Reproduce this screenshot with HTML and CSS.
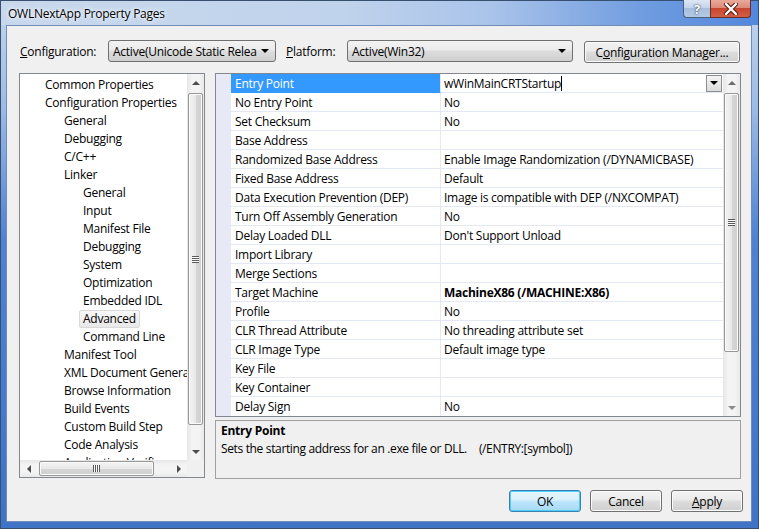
FILE: index.html
```html
<!DOCTYPE html>
<html lang="en">
<head>
    <meta charset="UTF-8">
    <title>OWLNextApp Property Pages</title>
    <link rel="stylesheet" href="styles.css">
</head>
<body>
    <div class="window">
        <div class="titlebar">
            <span class="title">OWLNextApp Property Pages</span>
            <div class="caption-buttons">
                <div class="cap-btn help">?</div>
                <div class="cap-btn close">
                    <svg width="14" height="12" viewBox="0 0 14 12">
                        <path d="M2 1 L12 11 M12 1 L2 11" stroke="#5a1d14" stroke-width="4.4" stroke-linecap="round"/>
                        <path d="M2 1 L12 11 M12 1 L2 11" stroke="#ffffff" stroke-width="2.4" stroke-linecap="round"/>
                    </svg>
                </div>
            </div>
        </div>

        <div class="client">
            <div class="config-row">
                <label class="label-config"><u>C</u>onfiguration:</label>
                <div class="combo combo-config">
                    <span>Active(Unicode Static Relea</span>
                    <span class="combo-arrow"></span>
                </div>
                <label class="label-platform"><u>P</u>latform:</label>
                <div class="combo combo-platform">
                    <span>Active(Win32)</span>
                    <span class="combo-arrow"></span>
                </div>
                <button class="btn btn-manager">C<u>o</u>nfiguration Manager...</button>
            </div>

            <div class="main">
                <!-- left tree -->
                <div class="tree-box">
                    <div class="tree-top">
                        <div class="tree-items">
                            <div class="tree-item l1"><span>Common Properties</span></div>
                            <div class="tree-item l1"><span>Configuration Properties</span></div>
                            <div class="tree-item l2"><span>General</span></div>
                            <div class="tree-item l2"><span>Debugging</span></div>
                            <div class="tree-item l2"><span>C/C++</span></div>
                            <div class="tree-item l2"><span>Linker</span></div>
                            <div class="tree-item l3"><span>General</span></div>
                            <div class="tree-item l3"><span>Input</span></div>
                            <div class="tree-item l3"><span>Manifest File</span></div>
                            <div class="tree-item l3"><span>Debugging</span></div>
                            <div class="tree-item l3"><span>System</span></div>
                            <div class="tree-item l3"><span>Optimization</span></div>
                            <div class="tree-item l3"><span>Embedded IDL</span></div>
                            <div class="tree-item l3 selected"><span>Advanced</span></div>
                            <div class="tree-item l3"><span>Command Line</span></div>
                            <div class="tree-item l2"><span>Manifest Tool</span></div>
                            <div class="tree-item l2"><span>XML Document Generator</span></div>
                            <div class="tree-item l2"><span>Browse Information</span></div>
                            <div class="tree-item l2"><span>Build Events</span></div>
                            <div class="tree-item l2"><span>Custom Build Step</span></div>
                            <div class="tree-item l2"><span>Code Analysis</span></div>
                            <div class="tree-item l2"><span>Application Verifier</span></div>
                        </div>
                        <div class="vscroll tree-vscroll">
                            <div class="sb-btn"><span class="tri-up"></span></div>
                            <div class="sb-track">
                                <div class="v-thumb"><span class="grip-h"></span></div>
                            </div>
                            <div class="sb-btn"><span class="tri-down"></span></div>
                        </div>
                    </div>
                    <div class="tree-bottom">
                        <div class="hscroll">
                            <div class="sb-btn"><span class="tri-left"></span></div>
                            <div class="sb-track">
                                <div class="h-thumb"><span class="grip-v"></span></div>
                            </div>
                            <div class="sb-btn"><span class="tri-right"></span></div>
                        </div>
                        <div class="sizebox"></div>
                    </div>
                </div>

                <!-- property grid -->
                <div class="prop-panel">
                    <div class="grid">
                        <div class="gutter"></div>
                        <div class="rows">
                            <div class="row selected">
                                <div class="name">Entry Point</div>
                                <div class="value editing">
                                    <span class="edit-text">wWinMainCRTStartup</span><span class="caret"></span>
                                    <span class="drop-btn"><span class="tri-down dark"></span></span>
                                </div>
                            </div>
                            <div class="row"><div class="name">No Entry Point</div><div class="value">No</div></div>
                            <div class="row"><div class="name">Set Checksum</div><div class="value">No</div></div>
                            <div class="row"><div class="name">Base Address</div><div class="value"></div></div>
                            <div class="row"><div class="name">Randomized Base Address</div><div class="value">Enable Image Randomization (/DYNAMICBASE)</div></div>
                            <div class="row"><div class="name">Fixed Base Address</div><div class="value">Default</div></div>
                            <div class="row"><div class="name">Data Execution Prevention (DEP)</div><div class="value">Image is compatible with DEP (/NXCOMPAT)</div></div>
                            <div class="row"><div class="name">Turn Off Assembly Generation</div><div class="value">No</div></div>
                            <div class="row"><div class="name">Delay Loaded DLL</div><div class="value">Don't Support Unload</div></div>
                            <div class="row"><div class="name">Import Library</div><div class="value"></div></div>
                            <div class="row"><div class="name">Merge Sections</div><div class="value"></div></div>
                            <div class="row"><div class="name">Target Machine</div><div class="value bold">MachineX86 (/MACHINE:X86)</div></div>
                            <div class="row"><div class="name">Profile</div><div class="value">No</div></div>
                            <div class="row"><div class="name">CLR Thread Attribute</div><div class="value">No threading attribute set</div></div>
                            <div class="row"><div class="name">CLR Image Type</div><div class="value">Default image type</div></div>
                            <div class="row"><div class="name">Key File</div><div class="value"></div></div>
                            <div class="row"><div class="name">Key Container</div><div class="value"></div></div>
                            <div class="row last"><div class="name">Delay Sign</div><div class="value">No</div></div>
                        </div>
                        <div class="vscroll grid-vscroll">
                            <div class="sb-btn"><span class="tri-up light"></span></div>
                            <div class="sb-track">
                                <div class="v-thumb"><span class="grip-h"></span></div>
                            </div>
                            <div class="sb-btn"><span class="tri-down light"></span></div>
                        </div>
                    </div>
                    <div class="desc">
                        <div class="desc-title">Entry Point</div>
                        <div class="desc-text">Sets the starting address for an .exe file or DLL.<span class="switch">(/ENTRY:[symbol])</span></div>
                    </div>
                </div>
            </div>

            <div class="buttons">
                <button class="btn btn-default">OK</button>
                <button class="btn">Cancel</button>
                <button class="btn"><u>A</u>pply</button>
            </div>
        </div>
    </div>
</body>
</html>
```

FILE: styles.css
```css
* {
    box-sizing: border-box;
}

body {
    margin: 0;
    font-family: "Open Sans", "Segoe UI", sans-serif;
    font-size: 12px;
    letter-spacing: -0.25px;
    color: #000;
    background: #fff;
}

/* window frame */
.window {
    width: 759px;
    height: 529px;
    border: 1px solid #37506f;
    background: linear-gradient(to bottom, #c4d6ec 0%, #9dbbe4 20%, #4f82d2 45%, #3f73c6 100%);
    display: flex;
    flex-direction: column;
}

.titlebar {
    height: 24px;
    display: flex;
    align-items: flex-start;
    padding-left: 7px;
    background: linear-gradient(to right, #c8d8ec 0%, #c0d3ec 45%, #a9c3ea 65%, #6f9ce0 85%, #5288dc 100%);
}

.title {
    line-height: 26px;
    font-size: 12px;
    text-shadow: 0 0 6px #fff, 0 0 3px #fff;
}

.caption-buttons {
    margin-left: auto;
    margin-right: 7px;
    display: flex;
    margin-top: -1px;
}

.cap-btn {
    height: 18px;
    display: flex;
    align-items: center;
    justify-content: center;
    border: 1px solid #4d5f7c;
    border-top: none;
}

.cap-btn.help {
    width: 27px;
    border-radius: 0 0 0 4px;
    border-right: none;
    background: linear-gradient(to bottom, #dce6f3 0%, #c5d5ea 45%, #a7bedd 50%, #b4cbe6 100%);
    color: #fff;
    font-weight: bold;
    font-size: 13px;
    text-shadow: 0 0 2px #33445e, 0 0 1px #33445e;
}

.cap-btn.close {
    width: 41px;
    border-radius: 0 0 4px 0;
    border-color: #6b2d24;
    background: linear-gradient(to bottom, #e9a99b 0%, #dd8b79 45%, #c8462d 50%, #d25f45 100%);
}

.client {
    margin: 0 6px 6px 5px;
    height: 497px;
    border: 1px solid #6f8db8;
    background: #f0f0f0;
    padding: 0 8px 0 0;
}

/* top row */
.config-row {
    display: flex;
    align-items: center;
    padding: 14px 0 0 13px;
    height: 36px;
}

.label-config {
    width: 88px;
}

.label-platform {
    width: 61px;
}

.combo {
    height: 22px;
    border: 1px solid #707070;
    border-radius: 3px;
    background: linear-gradient(to bottom, #f2f2f2 0%, #ebebeb 45%, #dddddd 50%, #cfcfcf 100%);
    display: flex;
    align-items: center;
    padding-left: 4px;
    white-space: nowrap;
    overflow: hidden;
}

.combo-config {
    width: 168px;
    margin-right: 10px;
}

.combo-platform {
    width: 226px;
    margin-right: 11px;
}

.combo-arrow {
    margin-left: auto;
    margin-right: 6px;
    border-left: 4px solid transparent;
    border-right: 4px solid transparent;
    border-top: 4px solid #000;
}

.btn {
    height: 22px;
    border: 1px solid #707070;
    border-radius: 3px;
    background: linear-gradient(to bottom, #f2f2f2 0%, #ebebeb 45%, #dddddd 50%, #cfcfcf 100%);
    font-family: inherit;
    font-size: 12px;
    letter-spacing: -0.25px;
    color: #000;
    padding: 0;
    box-shadow: inset 0 0 0 1px #fcfcfc;
}

.btn-manager {
    width: 156px;
    margin-top: 2px;
}

.btn-default {
    border-color: #3c7fb1;
    background: linear-gradient(to bottom, #eaf6fd 0%, #d9f0fc 45%, #bee6fd 50%, #a7d9f5 100%);
    box-shadow: inset 0 0 0 1px #48d0fb;
}

/* main area */
.main {
    display: flex;
    gap: 10px;
    margin-top: 11px;
    padding-left: 12px;
    height: 406px;
}

.tree-box {
    width: 186px;
    height: 405px;
    border: 1px solid #828790;
    background: #fff;
    display: flex;
    flex-direction: column;
}

.tree-top {
    display: flex;
    height: 386px;
}

.tree-items {
    width: 167px;
    overflow: hidden;
    padding-top: 2px;
}

.tree-item {
    height: 18px;
    line-height: 16px;
    white-space: nowrap;
}

.tree-item span {
    display: inline-block;
    padding: 0 3px;
    border: 1px solid transparent;
    border-radius: 2px;
}

.tree-item.l1 {
    padding-left: 21px;
}

.tree-item.l2 {
    padding-left: 40px;
}

.tree-item.l3 {
    padding-left: 59px;
}

.tree-item.selected span {
    border-color: #d9d9d9;
    background: linear-gradient(to bottom, #f8f8f8, #e8e8e8);
}

/* scrollbars */
.vscroll {
    width: 17px;
    display: flex;
    flex-direction: column;
    background: linear-gradient(to right, #e6e6e6, #f4f4f4 30%, #f4f4f4 70%, #e9e9e9);
}

.sb-btn {
    width: 17px;
    height: 17px;
    display: flex;
    align-items: center;
    justify-content: center;
    flex-shrink: 0;
}

.sb-track {
    flex: 1;
    display: flex;
}

.vscroll .sb-track {
    flex-direction: column;
    padding: 2px 1px 0 1px;
}

.v-thumb {
    height: 332px;
    border: 1px solid #979797;
    border-radius: 2px;
    background: linear-gradient(to right, #f3f3f3 0%, #e8e8e8 50%, #d6d6d6 51%, #cfcfcf 100%);
    box-shadow: inset 0 0 0 1px #fbfbfb;
    display: flex;
    align-items: center;
    justify-content: center;
}

.grid-vscroll .v-thumb {
    height: 259px;
}

.grip-h {
    width: 7px;
    height: 7px;
    background: repeating-linear-gradient(to bottom, #5a5a5a 0 1px, #fdfdfd 1px 2px);
}

.grip-v {
    width: 7px;
    height: 7px;
    background: repeating-linear-gradient(to right, #5a5a5a 0 1px, #fdfdfd 1px 2px);
}

.tree-bottom {
    display: flex;
    height: 17px;
}

.hscroll {
    width: 167px;
    display: flex;
    background: linear-gradient(to bottom, #e6e6e6, #f4f4f4 30%, #f4f4f4 70%, #e9e9e9);
}

.hscroll .sb-track {
    padding: 1px 0 1px 2px;
}

.h-thumb {
    width: 115px;
    border: 1px solid #979797;
    border-radius: 2px;
    background: linear-gradient(to bottom, #f3f3f3 0%, #e8e8e8 50%, #d6d6d6 51%, #cfcfcf 100%);
    box-shadow: inset 0 0 0 1px #fbfbfb;
    display: flex;
    align-items: center;
    justify-content: center;
}

.sizebox {
    width: 17px;
    background: #f0f0f0;
}

.tri-up, .tri-down {
    width: 0;
    height: 0;
    border-left: 4px solid transparent;
    border-right: 4px solid transparent;
}

.tri-up {
    border-bottom: 4px solid #4d4d4d;
}

.tri-down {
    border-top: 4px solid #4d4d4d;
}

.tri-up.light {
    border-bottom-color: #6d6d6d;
}

.tri-down.light {
    border-top-color: #8a8a8a;
}

.tri-down.dark {
    border-top-color: #000;
}

.tri-left, .tri-right {
    width: 0;
    height: 0;
    border-top: 4px solid transparent;
    border-bottom: 4px solid transparent;
}

.tri-left {
    border-right: 4px solid #4d4d4d;
}

.tri-right {
    border-left: 4px solid #4d4d4d;
}

/* property grid */
.prop-panel {
    width: 526px;
    display: flex;
    flex-direction: column;
}

.grid {
    height: 344px;
    border: 1px solid #828790;
    background: #fff;
    display: flex;
}

.gutter {
    width: 15px;
    background: #e7eaf6;
}

.rows {
    width: 492px;
}

.row {
    display: flex;
    height: 19px;
}

.row .name,
.row .value {
    height: 19px;
    padding-top: 1px;
    line-height: 17px;
    border-bottom: 1px solid #e3e8f4;
    white-space: nowrap;
    overflow: hidden;
}

.row.last .name,
.row.last .value {
    border-bottom: none;
}

.row .name {
    width: 210px;
    padding-left: 4px;
    border-right: 1px solid #e3e8f4;
}

.row .value {
    width: 282px;
    padding-left: 3px;
}

.value.bold {
    font-weight: bold;
}

.row.selected .name {
    background: #3399ff;
    color: #fff;
    border-bottom-color: #3399ff;
}

.value.editing {
    display: flex;
    align-items: center;
    padding-top: 0;
}

.caret {
    width: 1px;
    height: 15px;
    background: #000;
}

.drop-btn {
    margin-left: auto;
    margin-right: 1px;
    width: 16px;
    height: 17px;
    border: 1px solid #8d8d8d;
    background: linear-gradient(to bottom, #f4f4f4, #dcdcdc);
    display: flex;
    align-items: center;
    justify-content: center;
}

.desc {
    margin-top: 3px;
    height: 59px;
    border: 1px solid #a0a0a0;
    padding: 1px 0 0 5px;
    line-height: 18px;
}

.desc-title {
    font-weight: bold;
}

.desc-text {
    letter-spacing: -0.35px;
}

.switch {
    margin-left: 12px;
}

/* bottom buttons */
.buttons {
    display: flex;
    justify-content: flex-end;
    gap: 9px;
    margin-top: 11px;
}

.buttons .btn {
    width: 72px;
}
```
